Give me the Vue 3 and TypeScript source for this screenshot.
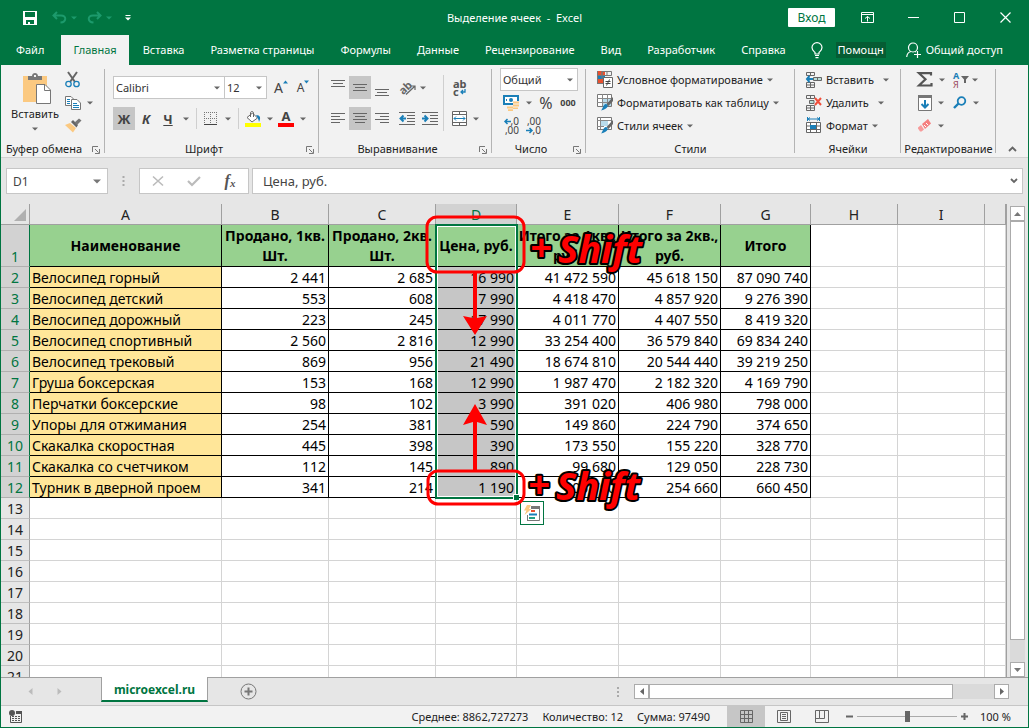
<script setup lang="ts">
import { h, ref } from 'vue'

const Caret = () =>
  h('svg', { class: 'caret', width: 6, height: 4, viewBox: '0 0 6 4', 'aria-hidden': 'true' }, [
    h('path', { d: 'M0 0.5H6L3 3.5Z', fill: 'currentColor' }),
  ])

const Launcher = () =>
  h('svg', { class: 'launcher', width: 8, height: 8, viewBox: '0 0 8 8', 'aria-hidden': 'true' }, [
    h('path', { d: 'M0.5 6V0.5H6M3 3L6.500 6.500M7.500 3V7.500H3', fill: 'none', stroke: '#777' }),
  ])

const tabs = [
  'Файл', 'Главная', 'Вставка', 'Разметка страницы', 'Формулы', 'Данные',
  'Рецензирование', 'Вид', 'Разработчик', 'Справка',
]
const activeTab = ref('Главная')

const columns = ['A', 'B', 'C', 'D', 'E', 'F', 'G', 'H', 'I', '']
const headings: string[][] = [
  ['Наименование'],
  ['Продано, 1кв.', 'Шт.'],
  ['Продано, 2кв.', 'Шт.'],
  ['Цена, руб.'],
  ['Итого за 1кв.,', 'руб.'],
  ['Итого за 2кв.,', 'руб.'],
  ['Итого'],
]
const rows: string[][] = [
  ['Велосипед горный', '2 441', '2 685', '16 990', '41 472 590', '45 618 150', '87 090 740'],
  ['Велосипед детский', '553', '608', '7 990', '4 418 470', '4 857 920', '9 276 390'],
  ['Велосипед дорожный', '223', '245', '17 990', '4 011 770', '4 407 550', '8 419 320'],
  ['Велосипед спортивный', '2 560', '2 816', '12 990', '33 254 400', '36 579 840', '69 834 240'],
  ['Велосипед трековый', '869', '956', '21 490', '18 674 810', '20 544 440', '39 219 250'],
  ['Груша боксерская', '153', '168', '12 990', '1 987 470', '2 182 320', '4 169 790'],
  ['Перчатки боксерские', '98', '102', '3 990', '391 020', '406 980', '798 000'],
  ['Упоры для отжимания', '254', '381', '590', '149 860', '224 790', '374 650'],
  ['Скакалка скоростная', '445', '398', '390', '173 550', '155 220', '328 770'],
  ['Скакалка со счетчиком', '112', '145', '890', '99 680', '129 050', '228 730'],
  ['Турник в дверной проем', '341', '214', '1 190', '405 790', '254 660', '660 450'],
]
const emptyRows = [13, 14, 15, 16, 17, 18, 19, 20, 21]
const zoomLevel = ref(100)
</script>

<template>
  <div class="app">
    <header class="titlebar">
      <div class="quick">
        <button class="q save" aria-label="Сохранить">
          <svg width="14" height="14" viewBox="0 0 14 14"><path d="M0 0H14V14H0Z" fill="#fff" /><path d="M2 1H12V6H2ZM3 9H11V13H7V11H5V13H3Z" fill="#007541" /></svg>
        </button>
        <button class="q undo" aria-label="Отменить">
          <svg width="15" height="13" viewBox="0 0 15 13"><path d="M5 1L1.500 4.500L5 8M2 4.500H9C15 4.500 14.500 11 8.500 11.500" fill="none" stroke="#1c9a6c" stroke-width="2" /></svg>
        </button>
        <button class="q more" aria-label="Список отмены"><Caret /></button>
        <button class="q undo redo" aria-label="Повторить">
          <svg width="15" height="13" viewBox="0 0 15 13"><path d="M10 1L13.500 4.500L10 8M13 4.500H6C0 4.500 0.500 11 6.500 11.500" fill="none" stroke="#1c9a6c" stroke-width="2" /></svg>
        </button>
        <button class="q more" aria-label="Список повтора"><Caret /></button>
        <button class="q custom" aria-label="Настройка панели">
          <svg width="6" height="6" viewBox="0 0 6 6"><path d="M0.500 0H5.500V1H0.500ZM0 2.500H6L3 5.500Z" fill="#fff" /></svg>
        </button>
      </div>
      <h1 class="title">Выделение ячеек&nbsp; -&nbsp; Excel</h1>
      <div class="window">
        <button class="login">Вход</button>
        <button class="win" aria-label="Параметры ленты">
          <svg width="13" height="11" viewBox="0 0 13 11"><path d="M0.500 0.500H12.500V10.500H0.500ZM0.500 2.500H12.500M6.500 9.500V4.500M4 6.500L6.500 4.500L9 6.500" fill="none" stroke="#fff" /></svg>
        </button>
        <button class="win" aria-label="Свернуть">
          <svg width="11" height="11" viewBox="0 0 11 11"><path d="M0 5.500H11" stroke="#fff" /></svg>
        </button>
        <button class="win" aria-label="Развернуть">
          <svg width="11" height="11" viewBox="0 0 11 11"><path d="M0.500 0.500H10.500V10.500H0.500Z" fill="none" stroke="#fff" /></svg>
        </button>
        <button class="win" aria-label="Закрыть">
          <svg width="11" height="11" viewBox="0 0 11 11"><path d="M0.500 0.500L10.500 10.500M10.500 0.500L0.500 10.500" stroke="#fff" stroke-width="1.200" /></svg>
        </button>
      </div>
    </header>

    <nav class="tabs">
      <button v-for="tab in tabs" :key="tab" class="tab" :class="{ active: tab === activeTab }" @click="activeTab = tab">{{ tab }}</button>
      <svg class="bulb" width="12" height="17" viewBox="0 0 12 17"><path d="M4 12V10.500C2.500 9 1 8 1 5.500A5 4.800 0 0 1 11 5.500C11 8 9.500 9 8 10.500V12ZM4 13.500H8M4.500 15.700H7.500" fill="none" stroke="#fff" stroke-width="1.200" /></svg>
      <button class="helper">Помощн</button>
      <button class="share">
        <svg width="15" height="16" viewBox="0 0 15 16"><circle cx="7" cy="5.500" r="4.500" fill="none" stroke="#fff" stroke-width="1.200" /><path d="M0.700 15C1 12 2.500 10 5 9.500M9 9.500L10 10M8 12.500H15M11.500 9V16" fill="none" stroke="#fff" stroke-width="1.200" /></svg>
        Общий доступ
      </button>
    </nav>

    <section class="ribbon">
      <div class="group clipboard">
        <div class="body">
          <button class="paste">
            <svg width="30" height="32" viewBox="0 0 30 32"><path d="M1 3H25V29H1Z" fill="#fbc981" /><path d="M6 3H10C10 -1 16 -1 16 3H20V7H6Z" fill="#777" /><path d="M12 2H14V4H12Z" fill="#f2f2f2" /><path d="M14.500 11.500H23L28.500 17V30.500H14.500Z" fill="#fff" stroke="#777" /><path d="M22.500 11.500V17.500H28.500" fill="none" stroke="#777" /></svg>
            <span>Вставить</span>
            <Caret />
          </button>
          <div class="clip-tools">
            <button class="tool" aria-label="Вырезать">
              <svg width="15" height="16" viewBox="0 0 15 16"><path d="M3 0L10 10M12 0L5 10" stroke="#666" stroke-width="2" /><circle cx="3.500" cy="12" r="2.700" fill="none" stroke="#1a7fb8" stroke-width="1.300" /><circle cx="11.500" cy="12" r="2.700" fill="none" stroke="#1a7fb8" stroke-width="1.300" /></svg>
            </button>
            <button class="tool" aria-label="Копировать">
              <svg width="16" height="14" viewBox="0 0 16 14"><path d="M0.500 0.500H6L8.500 3V9.500H0.500Z" fill="#fff" stroke="#777" /><path d="M2 3.500H5M2 5.500H5M2 7.500H5" stroke="#1a7fb8" /><path d="M6.500 3.500H12L15.500 7V13.500H6.500Z" fill="#fff" stroke="#777" /><path d="M8 7.500H12M8 9.500H14M8 11.500H14" stroke="#1a7fb8" /></svg>
              <Caret />
            </button>
            <button class="tool" aria-label="Формат по образцу">
              <svg width="17" height="15" viewBox="0 0 17 15"><path d="M0 7L5 5L11 10L8 14.500Z" fill="#fbc981" /><path d="M6 4L8 2L13 7L11.500 9.500Z" fill="#666" /><path d="M9.500 4.500L14 0.500L16.500 2.500L12 7Z" fill="#777" /></svg>
            </button>
          </div>
        </div>
        <div class="caption"><span>Буфер обмена</span><Launcher /></div>
      </div>

      <div class="group font">
        <div class="body stack">
          <div class="line">
            <label class="pick face"><select aria-label="Шрифт"><option>Calibri</option></select><Caret /></label>
            <label class="pick size"><select aria-label="Размер шрифта"><option>12</option></select><Caret /></label>
            <button class="cell grow" aria-label="Увеличить размер">A<svg width="5" height="4" viewBox="0 0 5 4"><path d="M0 3.500H5L2.500 0.500Z" fill="#1a7fb8" /></svg></button>
            <button class="cell shrink" aria-label="Уменьшить размер">A<svg width="5" height="4" viewBox="0 0 5 4"><path d="M0 0.500H5L2.500 3.500Z" fill="#1a7fb8" /></svg></button>
          </div>
          <div class="line">
            <button class="cell on"><b>Ж</b></button>
            <button class="cell"><b><i>К</i></b></button>
            <button class="cell"><b><u>Ч</u></b></button>
            <button class="drop" aria-label="Подчеркивание"><Caret /></button>
            <i class="rule"></i>
            <button class="cell narrow" aria-label="Границы">
              <svg width="14" height="14" viewBox="0 0 14 14"><path d="M0.500 0V12M6.500 0V12M12.500 0V12M0 0.500H13M0 6.500H13" stroke="#777" stroke-dasharray="1 1" /><path d="M0 12.500H13" stroke="#444" /></svg>
            </button>
            <button class="drop" aria-label="Виды границ"><Caret /></button>
            <i class="rule"></i>
            <button class="cell narrow" aria-label="Заливка">
              <svg width="16" height="16" viewBox="0 0 16 16"><path d="M2 6.500L7.500 2L12.500 7L7 11Z" fill="#fff" stroke="#666" /><path d="M5.500 6V2C5.500 0 8.500 0 8.500 2V6" fill="none" stroke="#666" /><path d="M11 4C15.500 4 16 7 14 11C13.500 8 12.500 7 11 4Z" fill="#1a7fb8" /><path d="M0 12H16V16H0Z" fill="#ff0" /></svg>
            </button>
            <button class="drop" aria-label="Цвет заливки"><Caret /></button>
            <button class="cell narrow ink" aria-label="Цвет шрифта"><b>A</b></button>
            <button class="drop" aria-label="Выбор цвета"><Caret /></button>
          </div>
        </div>
        <div class="caption"><span>Шрифт</span><Launcher /></div>
      </div>

      <div class="group align">
        <div class="body">
          <div class="align-grid">
            <button class="cell" aria-label="По верхнему краю"><svg width="14" height="16" viewBox="0 0 14 16"><path d="M0 0.500H14M2 3.500H12M0 6.500H14" stroke="#666" /></svg></button>
            <button class="cell on" aria-label="По середине"><svg width="14" height="16" viewBox="0 0 14 16"><path d="M0 4.500H14M2 7.500H12M0 10.500H14" stroke="#666" /></svg></button>
            <button class="cell" aria-label="По нижнему краю"><svg width="14" height="16" viewBox="0 0 14 16"><path d="M0 9.500H14M2 12.500H12M0 15.500H14" stroke="#666" /></svg></button>
            <button class="cell turn" aria-label="Ориентация">
              <svg width="17" height="16" viewBox="0 0 17 16"><text x="0" y="13" transform="rotate(-45 5 9)" font-size="11" font-weight="bold" fill="#666">ab</text><path d="M7 14.500L15.500 6.500M12 6H16V10" fill="none" stroke="#666" stroke-width="1.200" /></svg>
            </button>
            <button class="cell tail" aria-label="Варианты ориентации"><Caret /></button>
            <button class="cell" aria-label="По левому краю"><svg width="14" height="12" viewBox="0 0 14 12"><path d="M0 0.500H14M0 3.500H9M0 6.500H14M0 9.500H9" stroke="#666" /></svg></button>
            <button class="cell on" aria-label="По центру"><svg width="14" height="12" viewBox="0 0 14 12"><path d="M0 0.500H14M2 3.500H12M0 6.500H14M2 9.500H12" stroke="#666" /></svg></button>
            <button class="cell" aria-label="По правому краю"><svg width="14" height="12" viewBox="0 0 14 12"><path d="M0 0.500H14M5 3.500H14M0 6.500H14M5 9.500H14" stroke="#666" /></svg></button>
            <button class="cell turn" aria-label="Уменьшить отступ"><svg width="16" height="13" viewBox="0 0 16 13"><path d="M0 0.500H16M8 3.500H16M8 6.500H16M8 9.500H16M0 12.500H16" stroke="#666" /><path d="M7 6.500H1.500M4.500 3.500L1.500 6.500L4.500 9.500" fill="none" stroke="#1a7fb8" stroke-width="2" /></svg></button>
            <button class="cell" aria-label="Увеличить отступ"><svg width="16" height="13" viewBox="0 0 16 13"><path d="M0 0.500H16M8 3.500H16M8 6.500H16M8 9.500H16M0 12.500H16" stroke="#666" /><path d="M0 6.500H5.500M2.500 3.500L5.500 6.500L2.500 9.500" fill="none" stroke="#1a7fb8" stroke-width="2" /></svg></button>
          </div>
          <div class="merge-tools">
            <button class="cell wrap" aria-label="Перенести текст"><span>ab</span><span>c<svg width="6" height="5" viewBox="0 0 6 5"><path d="M5 0V3H1M3 1L1 3L3 5" fill="none" stroke="#1a7fb8" stroke-width="1.300" /></svg></span></button>
            <span class="pair">
              <button class="cell narrow" aria-label="Объединить"><svg width="15" height="15" viewBox="0 0 15 15"><path d="M0.500 0.500H14.500V14.500H0.500ZM0.500 3.500H14.500M0.500 11.500H14.500M7.500 0.500V3.500M7.500 11.500V14.500" fill="#fff" stroke="#666" /><path d="M2 7.500H13M4 5.500L2 7.500L4 9.500M11 5.500L13 7.500L11 9.500" fill="none" stroke="#1a7fb8" /></svg></button>
              <button class="drop" aria-label="Варианты объединения"><Caret /></button>
            </span>
          </div>
        </div>
        <div class="caption"><span>Выравнивание</span><Launcher /></div>
      </div>

      <div class="group number">
        <div class="body stack tight">
          <label class="pick format"><select aria-label="Числовой формат"><option>Общий</option></select><Caret /></label>
          <div class="line">
            <button class="cell" aria-label="Денежный формат"><svg width="17" height="16" viewBox="0 0 17 16"><path d="M1 1H15V9H1Z" fill="#fff" stroke="#1a7fb8" stroke-width="2" /><circle cx="8" cy="5" r="2" fill="#1a7fb8" /><path d="M3 4H4V6H3Z" fill="#1a7fb8" /><path d="M10 6H16V14H10ZM4 11H11V16H4Z" fill="#f2f2f2" /><path d="M10 6.500H16V8.500H10ZM10 9.500H16V11.500H10ZM10 12.500H15V14H10ZM4 11.500H10V13.500H4ZM5 14.300H10V16H5Z" fill="#fbc981" /></svg></button>
            <button class="drop" aria-label="Валюта"><Caret /></button>
            <button class="cell percent">%</button>
            <button class="cell thousands">000</button>
          </div>
          <div class="line">
            <button class="cell digits" aria-label="Увеличить разрядность"><span><svg width="7" height="7" viewBox="0 0 7 7"><path d="M7 3.500H1M3.500 1L1 3.500L3.500 6" fill="none" stroke="#1a7fb8" stroke-width="1.500" /></svg>,0</span><span>,00</span></button>
            <button class="cell digits" aria-label="Уменьшить разрядность"><span>,00</span><span><svg width="7" height="7" viewBox="0 0 7 7"><path d="M0 3.500H6M3.500 1L6 3.500L3.500 6" fill="none" stroke="#1a7fb8" stroke-width="1.500" /></svg>,0</span></button>
          </div>
        </div>
        <div class="caption"><span>Число</span><Launcher /></div>
      </div>

      <div class="group styles">
        <div class="body stack tight">
          <button class="item"><svg width="16" height="17" viewBox="0 0 16 17"><path d="M0 0H8V12H0Z" fill="#e8502f" /><path d="M0 4H8V8H0Z" fill="#1a7fb8" /><path d="M5 0.500H14.500V4.500H5ZM10 0V5M0.500 0V13M0 12.500H6M0 4.500H5M5 0V8" fill="none" stroke="#777" /><path d="M6.500 6.500H15.500V16.500H6.500Z" fill="#fff" stroke="#666" /><path d="M8.500 10.500H13.500M8.500 12.500H13.500M12.500 8.500L9.500 14.500" stroke="#444" /></svg><span>Условное форматирование</span><Caret /></button>
          <button class="item"><svg width="16" height="17" viewBox="0 0 16 17"><path d="M0.500 0.500H14.500V12.500H0.500Z" fill="#fff" stroke="#777" /><path d="M5 4H14V12H5Z" fill="#b9dcec" /><path d="M0 4.500H14M0 8.500H14M5.500 0V12M10.500 0V12" stroke="#888" /><path d="M16 3L9.500 10L11.500 12L16 7Z" fill="#666" /><path d="M8.500 10C12 10 12 15 4 16.500C6 14.500 6 11 8.500 10Z" fill="#1a7fb8" /></svg><span>Форматировать как таблицу</span><Caret /></button>
          <button class="item"><svg width="16" height="17" viewBox="0 0 16 17"><path d="M0.500 0.500H14.500V12.500H0.500Z" fill="#fff" stroke="#777" /><path d="M4 4H11V9H4Z" fill="#b9dcec" /><path d="M0 3.500H14M3.500 0V12M0 9.500H7" stroke="#888" /><path d="M16 3L9.500 10L11.500 12L16 7Z" fill="#666" /><path d="M8.500 10C12 10 12 15 4 16.500C6 14.500 6 11 8.500 10Z" fill="#1a7fb8" /></svg><span>Стили ячеек</span><Caret /></button>
        </div>
        <div class="caption"><span>Стили</span></div>
      </div>

      <div class="group cells">
        <div class="body stack tight">
          <button class="item wide"><svg width="16" height="16" viewBox="0 0 16 16"><path d="M0.500 0.500H8.500V3.500H0.500ZM4.500 0.500V3.500M0.500 10.500H8.500V15.500H0.500ZM4.500 10.500V15.500M0.500 13H8.500" fill="none" stroke="#666" /><path d="M7.500 5.500H15.500V8.500H7.500ZM11.500 5.500V8.500" fill="#b9dcd6" stroke="#666" /><path d="M7 7H1M3.500 4L1 7L3.500 10" fill="none" stroke="#1a7fb8" stroke-width="2" /></svg><span>Вставить</span><Caret /></button>
          <button class="item wide"><svg width="16" height="16" viewBox="0 0 16 16"><path d="M0.500 0.500H8.500V3.500H0.500ZM4.500 0.500V3.500M0.500 10.500H8.500V15.500H0.500ZM4.500 10.500V15.500M0.500 13H8.500" fill="none" stroke="#666" /><path d="M3.500 5.500H8V8.500H3.500Z" fill="#b9dcd6" stroke="#666" /><path d="M9 3L15 10M15 3L9 10" stroke="#f0503c" stroke-width="2" /></svg><span>Удалить</span><Caret /></button>
          <button class="item"><svg width="16" height="17" viewBox="0 0 16 17"><path d="M1.500 0V4M13.500 0V4M2 2H13M4 0.500L2 2L4 3.500M11 0.500L13 2L11 3.500" fill="none" stroke="#1a7fb8" /><path d="M0.500 5.500H14.500V15.500H0.500Z" fill="#fff" stroke="#666" /><path d="M0 9H14M0 12.500H14M4.500 5V15M10.500 5V15" stroke="#666" /><path d="M4 8H10V12H4Z" fill="#1a7fb8" /></svg><span>Формат</span><Caret /></button>
        </div>
        <div class="caption"><span>Ячейки</span></div>
      </div>

      <div class="group editing">
        <div class="body edit-grid">
          <button class="tool sum" aria-label="Автосумма"><svg width="16" height="15" viewBox="0 0 16 15"><path d="M14 3.500V1.200H2L8.500 7.200L2 13.500H14.500V11" fill="none" stroke="#555" stroke-width="2.200" /></svg><Caret /></button>
          <button class="tool filter" aria-label="Сортировка и фильтр"><svg width="17" height="17" viewBox="0 0 17 17"><text x="0" y="8" font-size="9" font-weight="bold" fill="#1a7fb8">А</text><text x="0" y="17" font-size="9" fill="#99455a">Я</text><path d="M8 5H16L13 8.500V12H11V8.500Z" fill="#666" /></svg><Caret /></button>
          <button class="tool" aria-label="Заполнить"><svg width="15" height="16" viewBox="0 0 15 16"><path d="M1.500 1H14.500V15.500H1.500Z" fill="#fff" stroke="#777" /><path d="M1 0H15V3H1Z" fill="#777" /><path d="M8 5V13M4.500 9L8 12.500L11.500 9" fill="none" stroke="#1a7fb8" stroke-width="2" /></svg><Caret /></button>
          <button class="tool" aria-label="Найти и выделить"><svg width="14" height="13" viewBox="0 0 14 13"><circle cx="8.500" cy="5" r="3.800" fill="none" stroke="#1a7fb8" stroke-width="1.800" /><path d="M5.500 7.500L1 12" stroke="#1a7fb8" stroke-width="2.400" /></svg><Caret /></button>
          <button class="tool" aria-label="Очистить"><svg width="15" height="13" viewBox="0 0 15 13"><path d="M5 5L11 0L14 4.500L8 10Z" fill="#f57f7f" /><path d="M4 6L7 10.500L4.500 12.500H3L1 9.500V8.500Z" fill="#f79b9b" /><path d="M7 6L9 8M9 4L11 6" stroke="#fff" /></svg><Caret /></button>
        </div>
        <div class="caption"><span>Редактирование</span></div>
      </div>
      <button class="collapse" aria-label="Свернуть ленту"><svg width="9" height="6" viewBox="0 0 9 6"><path d="M1 5L4.500 1.500L8 5" fill="none" stroke="#666" stroke-width="1.800" /></svg></button>
    </section>

    <section class="formula">
      <label class="name"><input value="D1" aria-label="Имя ячейки" /><svg width="8" height="5" viewBox="0 0 8 5"><path d="M0 0.500H8L4 4.500Z" fill="#777" /></svg></label>
      <svg class="dots" width="3" height="11" viewBox="0 0 3 11"><path d="M0.500 0H2.500V2H0.500ZM0.500 4H2.500V6H0.500ZM0.500 8H2.500V10H0.500Z" fill="#aaa" /></svg>
      <div class="fx">
        <button aria-label="Отмена"><svg width="12" height="10" viewBox="0 0 12 10"><path d="M1 0.500L11 9.500M11 0.500L1 9.500" stroke="#bbb" stroke-width="1.600" /></svg></button>
        <button aria-label="Ввод"><svg width="14" height="10" viewBox="0 0 14 10"><path d="M1 5L5 9L13 1" fill="none" stroke="#bbb" stroke-width="2.200" /></svg></button>
        <button class="func"><i>f</i><small>x</small></button>
      </div>
      <label class="entry"><input value="Цена, руб." aria-label="Строка формул" /><svg width="8" height="6" viewBox="0 0 8 6"><path d="M1 1L4 4L7 1" fill="none" stroke="#666" stroke-width="1.800" /></svg></label>
    </section>

    <main class="sheet">
      <div class="grid">
        <table>
          <colgroup>
            <col class="c-num" /><col class="c-a" /><col class="c-b" /><col class="c-b" /><col class="c-d" /><col class="c-e" /><col class="c-e" /><col class="c-g" /><col class="c-h" /><col class="c-h" /><col />
          </colgroup>
          <thead>
            <tr>
              <th class="corner"><svg width="12" height="12" viewBox="0 0 12 12"><path d="M12 0V12H0Z" fill="#b0b0b0" /></svg></th>
              <th v-for="(c, i) in columns" :key="i" class="col" :class="{ picked: c === 'D' }">{{ c }}</th>
            </tr>
          </thead>
          <tbody>
            <tr class="head">
              <th class="num picked">1</th>
              <th v-for="(lines, i) in headings" :key="i" class="title-cell"><span v-for="l in lines" :key="l">{{ l }}</span></th>
              <td v-for="n in 3" :key="n"></td>
            </tr>
            <tr v-for="(row, r) in rows" :key="r">
              <th class="num picked">{{ r + 2 }}</th>
              <td v-for="(v, i) in row" :key="i" class="data" :class="{ label: i === 0, chosen: i === 3 }">{{ v }}</td>
              <td v-for="n in 3" :key="n"></td>
            </tr>
            <tr v-for="n in emptyRows" :key="n">
              <th class="num">{{ n }}</th>
              <td v-for="k in 10" :key="k"></td>
            </tr>
          </tbody>
        </table>
        <div class="selection"></div>
        <button class="analysis" aria-label="Быстрый анализ">
          <svg width="16" height="16" viewBox="0 0 16 16"><path d="M3 15.500H15.500V2.500M3.500 10V15.500M8 1.500H15.500V4" fill="none" stroke="#777" /><path d="M7 1H16V4H7Z" fill="#777" /><path d="M3 0H7L5 4H7.500L0.500 10L2.500 5.500H0Z" fill="#fbc981" /><path d="M7 5H11V7H7Z" fill="#e8502f" /><path d="M5 8.500H13V10.500H5Z" fill="#1a7fb8" /><path d="M5 12H11V14H5Z" fill="#22a085" /></svg>
        </button>
        <svg class="notes" width="240" height="320" viewBox="420 210 240 320">
          <g fill="none" stroke="#f00" stroke-width="3">
            <rect x="427" y="217" width="97" height="55" rx="10" />
            <rect x="428" y="471" width="96" height="33" rx="10" />
          </g>
          <g fill="#f00">
            <path d="M473 272H477V318L487 316L475 335L463 316L473 318Z" />
            <path d="M473 471H477V422L487 425L475 404L463 425L473 422Z" />
          </g>
          <g class="shout">
            <text x="530" y="261">+</text><text x="558" y="263">Shift</text>
            <text x="528" y="498">+</text><text x="556" y="500">Shift</text>
          </g>
        </svg>
      </div>
      <div class="vscroll">
        <button aria-label="Вверх"><svg width="7" height="4" viewBox="0 0 7 4"><path d="M0 4H7L3.500 0Z" fill="#777" /></svg></button>
        <div class="vthumb"></div>
        <div class="vtrack"></div>
        <button aria-label="Вниз"><svg width="7" height="4" viewBox="0 0 7 4"><path d="M0 0H7L3.500 4Z" fill="#777" /></svg></button>
      </div>
    </main>

    <div class="sheetbar">
      <div class="steps">
        <button aria-label="Назад"><svg width="5" height="7" viewBox="0 0 5 7"><path d="M4.500 0V7L0.500 3.500Z" fill="#bbb" /></svg></button>
        <button aria-label="Вперед"><svg width="5" height="7" viewBox="0 0 5 7"><path d="M0.500 0V7L4.500 3.500Z" fill="#bbb" /></svg></button>
      </div>
      <button class="sheet-tab">microexcel.ru</button>
      <button class="add" aria-label="Новый лист"><svg width="17" height="17" viewBox="0 0 17 17"><circle cx="8.500" cy="8.500" r="7.500" fill="none" stroke="#777" /><path d="M8.500 4.500V12.500M4.500 8.500H12.500" stroke="#777" stroke-width="2" /></svg></button>
      <svg class="grip" width="2" height="10" viewBox="0 0 2 10"><path d="M0 0H2V2H0ZM0 4H2V6H0ZM0 8H2V10H0Z" fill="#aaa" /></svg>
      <div class="hscroll">
        <button aria-label="Влево"><svg width="4" height="7" viewBox="0 0 4 7"><path d="M4 0V7L0 3.500Z" fill="#666" /></svg></button>
        <div class="hthumb"></div>
        <div class="htrack"></div>
        <button aria-label="Вправо"><svg width="4" height="7" viewBox="0 0 4 7"><path d="M0 0V7L4 3.500Z" fill="#666" /></svg></button>
      </div>
    </div>

    <footer class="status">
      <svg class="macro" width="13" height="13" viewBox="0 0 13 13"><path d="M1.500 6V12.500H12.500V3" fill="none" stroke="#555" /><path d="M7 1H13V4H7Z" fill="#555" /><circle cx="3" cy="3" r="3" fill="#555" /><path d="M3 6.500H11M3 8.500H11M3 10.500H11" stroke="#555" stroke-dasharray="2 1" /></svg>
      <div class="stats"><span>Среднее: 8862,727273</span><span>Количество: 12</span><span>Сумма: 97490</span></div>
      <div class="views">
        <button class="view on" aria-label="Обычный"><svg width="13" height="13" viewBox="0 0 13 13"><path d="M0.500 0.500H12.500V12.500H0.500ZM4.500 0V13M8.500 0V13M0 4.500H13M0 8.500H13" fill="none" stroke="#666" /></svg></button>
        <button class="view" aria-label="Разметка"><svg width="14" height="13" viewBox="0 0 14 13"><path d="M0.500 0.500H13.500V12.500H0.500ZM3.500 2.500H10.500V10.500H3.500ZM5 4.500H9M5 6.500H9M5 8.500H9" fill="none" stroke="#666" /></svg></button>
        <button class="view" aria-label="Страничный"><svg width="14" height="13" viewBox="0 0 14 13"><path d="M0.500 0.500H13.500V12.500H0.500ZM4.500 0.500V8.500H9.500V0.500M0.500 8.500H4.500" fill="none" stroke="#666" /></svg></button>
      </div>
      <div class="zoom">
        <button aria-label="Мельче"><svg width="7" height="7" viewBox="0 0 7 7"><path d="M0 3.500H7" stroke="#666" stroke-width="2" /></svg></button>
        <input v-model="zoomLevel" type="range" min="0" max="200" aria-label="Масштаб" />
        <button aria-label="Крупнее"><svg width="7" height="7" viewBox="0 0 7 7"><path d="M0 3.500H7M3.500 0V7" stroke="#666" stroke-width="2" /></svg></button>
      </div>
      <output class="percent-out">{{ zoomLevel }} %</output>
    </footer>
  </div>
</template>

<style>
body { margin: 0; }
</style>

<style scoped>
.app {
  --green: #007541;
  box-sizing: border-box;
  display: flex;
  flex-direction: column;
  height: 100vh;
  border: solid var(--green);
  border-width: 0 1px 1px;
  background: #e6e6e6;
  color: #222;
  font: 11px/16px "Noto Sans", "Open Sans", sans-serif;
  overflow: hidden;
}
.app *, .app *::before, .app *::after { box-sizing: border-box; }
button, input, select { font: inherit; color: inherit; border: 0; margin: 0; padding: 0; background: none; white-space: nowrap; }
svg { display: block; flex: none; overflow: visible; }
.caret { color: #666; }

.titlebar { display: grid; grid-template-columns: 1fr auto 1fr; align-items: center; height: 35px; background: var(--green); color: #fff; }
.quick { display: flex; align-items: center; padding-left: 22px; }
.q { display: flex; justify-content: center; align-items: center; }
.save { width: 14px; margin-right: 15px; }
.undo { width: 15px; }
.redo { margin-left: 7px; }
.more { width: 13px; }
.more .caret { color: #1c9a6c; }
.custom { width: 26px; }
.title { margin: 0; font-size: 11px; font-weight: 400; }
.window { display: flex; justify-content: flex-end; align-items: center; height: 32px; }
.login { width: 47px; height: 19px; margin-right: 9px; background: #fff; color: var(--green); border-radius: 1px; font-size: 12px; }
.win { display: flex; justify-content: center; align-items: center; width: 46px; height: 32px; }

.tabs { display: flex; align-items: center; gap: 2px; height: 30px; padding-left: 3px; background: var(--green); color: #fff; }
.tab { height: 30px; padding: 0 12px; }
.tab.active { background: #f2f2f2; color: var(--green); margin-left: 3px; }
.bulb { margin: 0 11px 0 auto; }
.helper { width: 50px; height: 16px; background: #055c33; text-align: center; }
.share { display: flex; align-items: center; gap: 5px; margin: 0 25px 0 18px; }

.ribbon { display: flex; height: 93px; background: #f2f2f2; border-bottom: 1px solid #d2d2d2; }
.group { position: relative; display: flex; flex-direction: column; flex: none; padding-top: 3px; }
.group::after { content: ""; position: absolute; right: 0; top: 4px; bottom: 4px; width: 1px; background: #b4b4b4; }
.body { display: flex; height: 73px; }
.caption { display: flex; justify-content: center; align-items: center; height: 16px; position: relative; }
.launcher { position: absolute; right: 5px; top: 5px; }
.clipboard { width: 104px; }
.clipboard .caption { padding-right: 18px; }
.font { width: 214px; }
.font .caption, .align .caption, .number .caption { padding-right: 16px; }
.align { width: 173px; }
.number { width: 94px; }
.styles { width: 209px; }
.cells { width: 106px; }
.editing { width: 95px; }
.paste { display: flex; flex-direction: column; align-items: center; width: 50px; margin-left: 9px; padding-top: 5px; }
.paste svg:first-child { margin-left: 4px; }
.paste span { margin: 1px 0 5px; }
.clip-tools { display: grid; grid-template-rows: repeat(3, 23px); margin-left: 5px; }
.tool { display: flex; align-items: center; gap: 6px; }
.filter { gap: 2px; }
.stack { flex-direction: column; gap: 8px; padding: 8px 0 0 8px; }
.stack.tight { gap: 0; padding-top: 0; }
.stack.tight > * { height: 23px; }
.line { display: flex; align-items: center; height: 23px; }
.pick { display: flex; align-items: center; height: 23px; background: #fff; border: 1px solid #c6c6c6; padding-right: 4px; }
.pick select { flex: 1; min-width: 0; height: 21px; padding-left: 2px; appearance: none; outline: 0; color: #333; }
.face { width: 112px; }
.size { width: 43px; margin-left: -1px; margin-right: 3px; }
.format { width: 78px; }
.cell { display: flex; justify-content: center; align-items: center; width: 22px; height: 23px; font-size: 13px; color: #444; }
.cell.on { background: #c6c6c6; }
.cell.narrow { width: 20px; }
.grow { font-size: 14px; }
.shrink { font-size: 12px; }
.grow svg, .shrink svg { align-self: flex-start; margin-top: 4px; }
.drop { display: flex; justify-content: center; align-items: center; width: 13px; height: 23px; }
.rule { width: 1px; height: 21px; background: #cfcfcf; margin: 0 4px; }
.ink b { width: 16px; line-height: 13px; border-bottom: 4px solid #f00; text-align: center; }
.align-grid { display: grid; grid-template-columns: 22px 22px 22px 26px 20px; grid-auto-rows: 23px; row-gap: 8px; padding: 8px 4px 0 8px; }
.align-grid .turn { width: 28px; }
.align-grid .tail { width: 8px; }
.merge-tools { display: flex; flex-direction: column; gap: 8px; height: 56px; margin-top: 7px; padding: 1px 0 0 5px; border-left: 1px solid #cfcfcf; }
.pair { display: flex; }
.wrap { flex-direction: column; font-size: 11px; line-height: 8px; font-weight: 700; color: #555; align-items: flex-start; padding-left: 4px; }
.wrap span { display: flex; align-items: center; gap: 1px; }
.percent { font-size: 16px; }
.thousands { font-size: 9px; font-weight: 700; }
.digits { flex-direction: column; align-items: flex-end; font-size: 10px; line-height: 9px; padding-right: 3px; }
.digits span { display: flex; align-items: center; }
.item { display: flex; align-items: center; gap: 4px; }
.styles .stack, .cells .stack { padding-left: 11px; }
.cells .wide span { margin-right: 5px; }
.edit-grid { display: grid; grid-template-columns: 36px 1fr; grid-auto-rows: 23px; padding-left: 16px; }

.collapse { margin: 81px auto 0; align-self: flex-start; }

.formula { display: flex; align-items: center; height: 46px; padding: 0 5px; font-size: 13px; }
.name, .fx, .entry { display: flex; align-items: center; height: 26px; background: #fff; border: 1px solid #c6c6c6; }
.name { width: 102px; padding-right: 6px; }
.name input, .entry input { flex: 1; min-width: 0; height: 24px; outline: 0; color: #444; }
.name input { padding-left: 6px; font-size: 12px; }
.dots { margin: 0 14px; }
.fx { width: 110px; padding: 0 8px; justify-content: space-between; margin-right: 3px; }
.fx button { display: flex; justify-content: center; align-items: center; width: 20px; height: 24px; }
.func { font-family: "Liberation Serif", serif; font-size: 16px; font-weight: 700; color: #555; }
.func small { font-size: 11px; font-style: italic; padding-top: 4px; }
.entry { flex: 1; padding-right: 4px; }
.entry input { padding-left: 10px; }

.sheet { display: flex; flex: 1; min-height: 0; }
.grid { position: relative; flex: 1; min-width: 0; overflow: hidden; border-right: 1px solid #a0a0a0; }
table { width: 100%; table-layout: fixed; border-collapse: separate; border-spacing: 0; background: #fff; font-size: 14px; line-height: 18px; color: #000; }
.c-num { width: 29px; }
.c-a { width: 192px; }
.c-b { width: 107px; }
.c-d { width: 81px; }
.c-e { width: 102px; }
.c-g { width: 90px; }
.c-h { width: 87px; }
th, td { height: 21px; padding: 2px 0 0; border: solid #d4d4d4; border-width: 0 1px 1px 0; white-space: nowrap; }
.col, .corner, .num { background: #e6e6e6; border-color: #a0a0a0; font-weight: 400; }
.col, .num { color: #222; }
.num { border-bottom-color: #c0c0c0; }
.corner { padding-right: 3px; }
.corner svg { margin-left: auto; }
.picked { background: #d2d2d2; color: var(--green); }
.num.picked { border-right-color: var(--green); border-bottom-color: #b0b0b0; }
.head .num { vertical-align: bottom; }
.head > * { height: 42px; }
.title-cell { background: #97d18f; border-color: #000; padding-top: 1px; line-height: 20px; }
.title-cell span { display: flex; justify-content: center; }
.data { border-color: #000; text-align: right; padding-right: 2px; }
.label { background: #ffe699; text-align: left; padding-left: 2px; }
.chosen { background: #c6c6c6; }
.selection { position: absolute; left: 434px; top: 20px; width: 83px; height: 275px; border: 2px solid var(--green); box-shadow: inset 0 0 0 1px #fff; }
.selection::after { content: ""; position: absolute; right: -3px; bottom: -3px; width: 6px; height: 6px; background: var(--green); border: solid #fff; border-width: 1px 0 0 1px; }
.analysis { position: absolute; left: 519px; top: 297px; width: 24px; height: 24px; display: flex; justify-content: center; align-items: center; background: #fff; border: 1px solid var(--green); }
.notes { position: absolute; left: 419px; top: 6px; pointer-events: none; }
.shout { font: italic 700 38px "Open Sans", "Noto Sans", sans-serif; fill: #f00; stroke: #000; stroke-width: 4px; stroke-linejoin: round; paint-order: stroke; }

.vscroll { display: flex; flex-direction: column; width: 21px; padding: 2px 3px 0; }
.vscroll button, .hscroll button { display: flex; justify-content: center; align-items: center; flex: none; width: 15px; height: 15px; background: #fff; border: 1px solid #ababab; }
.vthumb { flex: 19; background: #fff; border: 1px solid #ababab; }
.vtrack { flex: 1; background: #dadada; }

.sheetbar { display: flex; align-items: center; height: 28px; border-top: 1px solid #a0a0a0; padding-right: 19px; }
.steps { display: flex; gap: 24px; width: 100px; padding-left: 27px; }
.sheet-tab { align-self: flex-start; width: 107px; height: 25px; margin-top: -1px; padding-top: 2px; background: #fff; border: solid #a0a0a0; border-width: 0 1px; border-bottom: 2px solid var(--green); color: var(--green); font-size: 12px; font-weight: 700; }
.add { margin-left: 32px; }
.grip { margin-left: auto; margin-right: 15px; }
.hscroll { display: flex; width: 375px; height: 15px; }
.hthumb { flex: 304; background: #fff; border: 1px solid #ababab; }
.htrack { flex: 41; background: #dadada; }

.status { display: flex; align-items: center; height: 22px; background: #f2f2f2; border-top: 1px solid #c6c6c6; padding-left: 8px; }
.stats { display: flex; gap: 14px; margin-left: auto; margin-right: 17px; }
.views { display: flex; }
.view { display: flex; justify-content: center; align-items: center; width: 38px; height: 21px; }
.view.on { background: #c6c6c6; }
.zoom { display: flex; align-items: center; gap: 4px; margin-left: 5px; }
.zoom input { appearance: none; width: 100px; height: 11px; background: linear-gradient(#aaa, #aaa) center / 100% 1px no-repeat; }
.zoom input::-webkit-slider-thumb { appearance: none; width: 5px; height: 11px; background: #666; }
.percent-out { width: 60px; padding-left: 12px; }
</style>
